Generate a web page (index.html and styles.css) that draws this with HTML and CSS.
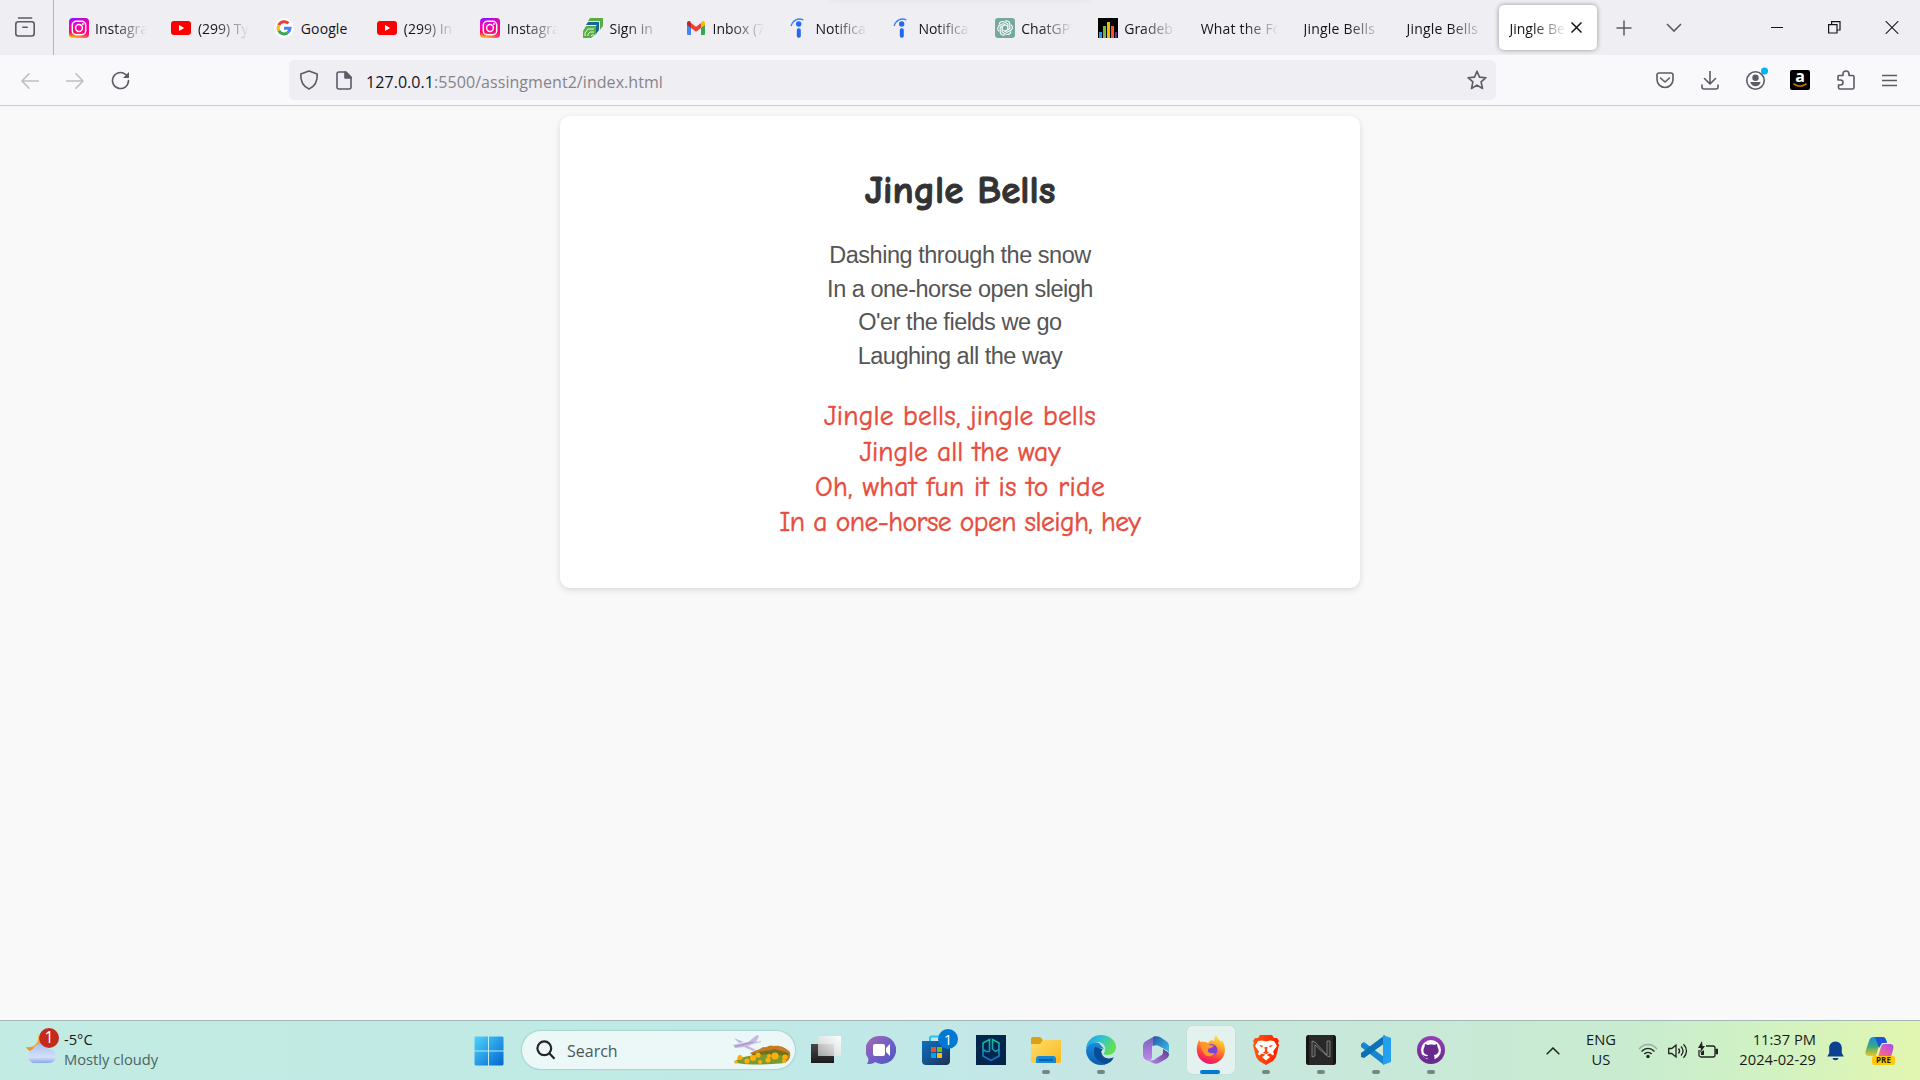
FILE: index.html
```
<!DOCTYPE html>
<html lang="en">
<head>
<meta charset="utf-8">
<title>Jingle Bells</title>
<link rel="stylesheet" href="styles.css">
</head>
<body>
<svg width="0" height="0" class="defs">
  <defs>
    <linearGradient id="insta" x1="0" y1="0" x2="0" y2="1"><stop offset="0" stop-color="#8a13ff"/><stop offset=".35" stop-color="#ff00c8"/><stop offset=".7" stop-color="#ff0069"/><stop offset="1" stop-color="#ffd000"/></linearGradient>
    <linearGradient id="instaR" x1="0" y1="0" x2="1" y2="0"><stop offset=".3" stop-color="#ff0090" stop-opacity="0"/><stop offset="1" stop-color="#ff0090"/></linearGradient>
    <linearGradient id="win" x1="0" y1="0" x2="1" y2="1"><stop offset="0" stop-color="#4fd3ff"/><stop offset="1" stop-color="#0067cf"/></linearGradient>
    <linearGradient id="cloud" x1="0" y1="0" x2="0" y2="1"><stop offset="0" stop-color="#a9c4f5"/><stop offset=".7" stop-color="#d4dff8"/><stop offset="1" stop-color="#86a8ea"/></linearGradient>
    <linearGradient id="moon" x1="0" y1="0" x2="0" y2="1"><stop offset="0" stop-color="#f8c13c"/><stop offset="1" stop-color="#ee8a1d"/></linearGradient>
    <linearGradient id="chat" x1="0" y1="0" x2="1" y2="1"><stop offset="0" stop-color="#a768b0"/><stop offset=".5" stop-color="#7460c4"/><stop offset="1" stop-color="#4c55c0"/></linearGradient>
    <linearGradient id="store" x1="0" y1="0" x2="1" y2="1"><stop offset="0" stop-color="#0a72c4"/><stop offset="1" stop-color="#203052"/></linearGradient>
    <linearGradient id="folder" x1="0" y1="0" x2="1" y2="1"><stop offset="0" stop-color="#ffdd6b"/><stop offset="1" stop-color="#fbb91c"/></linearGradient>
    <linearGradient id="edgeTop" x1="0" y1="0" x2="1" y2=".4"><stop offset="0" stop-color="#1d9be0"/><stop offset=".5" stop-color="#2fc3d8"/><stop offset="1" stop-color="#63e04f"/></linearGradient>
    <linearGradient id="edgeLow" x1="0" y1="0" x2="0" y2="1"><stop offset="0" stop-color="#1690dc"/><stop offset="1" stop-color="#0c5cb0"/></linearGradient>
    <linearGradient id="foxBody" x1=".8" y1="0" x2=".4" y2="1"><stop offset="0" stop-color="#fff04a"/><stop offset=".4" stop-color="#ff9a25"/><stop offset=".75" stop-color="#ff3d3f"/><stop offset="1" stop-color="#e9127b"/></linearGradient>
    <linearGradient id="brave" x1="0" y1="0" x2="1" y2="0"><stop offset="0" stop-color="#ff5a14"/><stop offset="1" stop-color="#ff1f00"/></linearGradient>
    <linearGradient id="gg" x1="0" y1="0" x2="0" y2="1"><stop offset="0" stop-color="#12c39d"/><stop offset="1" stop-color="#1569ce"/></linearGradient>
    <linearGradient id="git" x1="0" y1="0" x2="0" y2="1"><stop offset="0" stop-color="#983db4"/><stop offset="1" stop-color="#65298c"/></linearGradient>
    <linearGradient id="m1" x1="0" y1="0" x2="0" y2="1"><stop offset="0" stop-color="#7560bd"/><stop offset="1" stop-color="#c487ed"/></linearGradient>
    <linearGradient id="m2" x1="0" y1="0" x2="1" y2="1"><stop offset="0" stop-color="#205ba8"/><stop offset="1" stop-color="#42c8f0"/></linearGradient>
    <linearGradient id="m3" x1="0" y1="1" x2="1" y2="0"><stop offset="0" stop-color="#bf83e8"/><stop offset="1" stop-color="#543a92"/></linearGradient>
    <linearGradient id="cop1" x1="0" y1="0" x2="0" y2="1"><stop offset="0" stop-color="#158ae8"/><stop offset=".5" stop-color="#3da97c"/><stop offset="1" stop-color="#f2c61f"/></linearGradient>
    <linearGradient id="cop2" x1="0" y1="1" x2="1" y2="0"><stop offset="0" stop-color="#f7786b"/><stop offset=".5" stop-color="#e05bb5"/><stop offset="1" stop-color="#9a50ee"/></linearGradient>
    <linearGradient id="dark" x1="0" y1="0" x2="0" y2="1"><stop offset="0" stop-color="#4a4a4a"/><stop offset="1" stop-color="#1b1b1b"/></linearGradient>
    <linearGradient id="glass" x1="1" y1="0" x2="0" y2="1"><stop offset="0" stop-color="#ffffff"/><stop offset="1" stop-color="#cfcfcf" stop-opacity=".75"/></linearGradient>
    <symbol id="i-insta" viewBox="0 0 20 20"><rect width="20" height="20" rx="4" fill="url(#insta)"/><rect width="20" height="20" rx="4" fill="url(#instaR)" opacity=".7"/><rect x="3.3" y="3.3" width="13.4" height="13.4" rx="4" fill="none" stroke="#fff" stroke-width="1.5"/><circle cx="10" cy="10" r="3.4" fill="none" stroke="#fff" stroke-width="1.5"/><circle cx="13.9" cy="6.1" r="1" fill="#fff"/></symbol>
    <symbol id="i-yt" viewBox="0 0 20 20"><rect y="3" width="20" height="14" rx="3" fill="#f00"/><path d="M8 7l5.2 3L8 13z" fill="#fff"/></symbol>
    <symbol id="i-google" viewBox="0 0 20 20"><circle cx="10" cy="10" r="10" fill="#fff"/><g fill="none" stroke-width="3"><path d="M14.4 5.4A6 6 0 0 0 4.8 7.2" stroke="#ea4335"/><path d="M4.8 7.2a6 6 0 0 0 0 5.6" stroke="#fbbc05"/><path d="M4.8 12.8a6 6 0 0 0 9 1.8" stroke="#34a853"/><path d="M13.8 14.6A6 6 0 0 0 16 10.3H10" stroke="#4285f4"/></g></symbol>
    <symbol id="i-sign" viewBox="0 0 20 20"><path d="M7 0h13v8l-3 4V3H5z" fill="#59ad45"/><path d="M5 4h11v8l-3 4V7H3z" fill="#16669c"/><path d="M4.500 3.500h12M2.500 7.500h11" stroke="#efeef3" stroke-width=".8"/><path d="M3 8h10v8l-5 4H0v-7z" fill="#59ad45"/><path d="M2 18v-3l3-4h6M5 18v-2l2-2h4M8 18l1-1h2" fill="none" stroke="#e5f3df" stroke-width="1"/></symbol>
    <symbol id="i-gmail" viewBox="0 0 20 20"><path d="M1 6v10a1 1 0 0 0 1 1h3V9z" fill="#4285f4"/><path d="M15 9v8h3a1 1 0 0 0 1-1V6z" fill="#34a853"/><path d="M15 5v5l4-3V5c0-2-2-2.6-3.3-1.600z" fill="#fbbc04"/><path d="M5 5v5l5 3.800L15 10V5l-5 3.800z" fill="#ea4335"/><path d="M1 5v2l4 3V5l-.7-1.600C3 2.400 1 3 1 5z" fill="#c5221f"/></symbol>
    <symbol id="i-indeed" viewBox="0 0 20 20"><path d="M2 8C4 2 9-.5 14.500 2" fill="none" stroke="#3c80f5" stroke-width="1.300"/><circle cx="9.700" cy="6" r="2.700" fill="#2268f2"/><rect x="7.800" y="10.200" width="4" height="9.500" rx="1.800" fill="#2268f2"/></symbol>
    <symbol id="i-gpt" viewBox="0 0 20 20"><rect width="20" height="20" rx="3" fill="#75a99b"/><g fill="none" stroke="#fff" stroke-width="1.100"><g id="petal"><path d="M10 3.200a3.400 3.400 0 0 1 4.800 2.400v5L10 13.200"/></g><use href="#petal" transform="rotate(60 10 10)"/><use href="#petal" transform="rotate(120 10 10)"/><use href="#petal" transform="rotate(180 10 10)"/><use href="#petal" transform="rotate(240 10 10)"/><use href="#petal" transform="rotate(300 10 10)"/></g></symbol>
    <symbol id="i-grade" viewBox="0 0 20 20"><path d="M0 0h20v20H0z"/><path d="M1 14h3v6H1z" fill="#1e9cf0"/><path d="M5 8h3v12H5z" fill="#6fbd3c"/><path d="M9 4h3v16H9z" fill="#f7b500"/><path d="M13 8h3v12h-3z" fill="#f4591f"/><path d="M17 14h2v6h-2z" fill="#6a2793"/></symbol>
  </defs>
</svg>

<header class="tabstrip">
  <div class="strip-shadow"></div>
  <div class="view-btn"><svg width="20" height="20" viewBox="0 0 20 20" fill="none" stroke="#5b5b66" stroke-width="1.600" stroke-linecap="round"><rect x=".8" y="4.800" width="18.400" height="14.200" rx="2.500"/><path d="M3.500 1h13M7.800 10.200h4.400"/></svg></div>
  <nav class="tabs">
    <div class="tab"><svg><use href="#i-insta"/></svg><span>Instagra</span></div>
    <div class="tab"><svg><use href="#i-yt"/></svg><span>(299) Ty</span></div>
    <div class="tab"><svg><use href="#i-google"/></svg><span class="whole">Google</span></div>
    <div class="tab"><svg><use href="#i-yt"/></svg><span>(299) In</span></div>
    <div class="tab"><svg><use href="#i-insta"/></svg><span>Instagra</span></div>
    <div class="tab"><svg><use href="#i-sign"/></svg><span>Sign in</span></div>
    <div class="tab"><svg><use href="#i-gmail"/></svg><span>Inbox (7</span></div>
    <div class="tab"><svg><use href="#i-indeed"/></svg><span>Notifica</span></div>
    <div class="tab"><svg><use href="#i-indeed"/></svg><span>Notifica</span></div>
    <div class="tab"><svg><use href="#i-gpt"/></svg><span>ChatGPT</span></div>
    <div class="tab"><svg><use href="#i-grade"/></svg><span>Gradeb</span></div>
    <div class="tab title-only"><span>What the Fo</span></div>
    <div class="tab title-only"><span>Jingle Bells</span></div>
    <div class="tab title-only"><span>Jingle Bells</span></div>
    <div class="tab active"><span>Jingle Be</span><svg class="close" viewBox="0 0 11 11" stroke="#15141a" stroke-width="1.500"><path d="M.5.5l10 10M10.500.5l-10 10"/></svg></div>
  </nav>
  <div class="strip-tools">
    <svg width="16" height="16" viewBox="0 0 16 16" stroke="#5b5b66" stroke-width="1.500"><path d="M8 .5v15M.5 8h15"/></svg>
    <svg width="16" height="10" viewBox="0 0 16 10" fill="none" stroke="#5b5b66" stroke-width="1.600"><path d="M1 1l7 7 7-7"/></svg>
  </div>
  <div class="win-tools">
    <svg width="12" height="13" viewBox="0 0 12 13" stroke="#15141a"><path d="M0 6.500h12"/></svg>
    <svg width="13" height="13" viewBox="0 0 13 13" fill="none" stroke="#15141a" stroke-width="1.200"><path d="M.6 3.600h8.400v8.400H.6zM3.600 3.600V.6h8.400V9H9"/></svg>
    <svg width="14" height="13" viewBox="0 0 14 13" stroke="#15141a" stroke-width="1.100"><path d="M.7.2l12.600 12.600M13.300.2L.7 12.800"/></svg>
  </div>
</header>

<section class="toolbar">
  <div class="history">
    <svg width="18" height="16" viewBox="0 0 18 16" class="off"><path d="M17.500 8H1M8 .800L1 8l7 7.200"/></svg>
    <svg width="18" height="16" viewBox="0 0 18 16" class="off"><path d="M.5 8H17M10 .800L17 8l-7 7.200"/></svg>
    <svg width="19" height="19" viewBox="0 0 19 19"><path d="M17.500 9.500a8 8 0 1 1-3-6.200l1.500 1.500"/><path d="M18 1v6h-6z" fill="#5b5b66" stroke="none"/></svg>
  </div>
  <div class="url">
    <svg width="20" height="20" viewBox="0 0 20 20"><path d="M10 1l8.200 3c.4 7-2 12.200-8.200 15C3.800 16.200 1.400 11 1.800 4z"/></svg>
    <svg width="16" height="19" viewBox="0 0 16 19" class="page-icon"><path d="M3 1h7l5 5v10a2 2 0 0 1-2 2H3a2 2 0 0 1-2-2V3a2 2 0 0 1 2-2z"/><path d="M9 1v6h6z" fill="#5b5b66"/></svg>
    <p class="address"><b>127.0.0.1</b>:5500/assingment2/index.html</p>
    <svg width="20" height="20" viewBox="0 0 20 20"><path d="M10 1.200l2.500 5.900 6.400.6-4.800 4.200 1.400 6.600-5.500-3.400-5.500 3.400 1.400-6.600L1.100 7.700l6.400-.6z"/></svg>
  </div>
  <div class="actions">
    <svg width="18" height="17" viewBox="0 0 18 17"><path d="M3 1h12a2 2 0 0 1 2 2v4.500a8 8 0 0 1-16 0V3a2 2 0 0 1 2-2zM4.500 6L9 10l4.500-4"/></svg>
    <svg width="18" height="19" viewBox="0 0 18 19"><path d="M9 0v12.500M3.500 7.500L9 13l5.500-5.500M1 14v2a2 2 0 0 0 2 2h12a2 2 0 0 0 2-2v-2"/></svg>
    <svg width="22" height="23" viewBox="0 0 22 23" class="account"><circle cx="9.500" cy="13.500" r="8.700"/><g fill="#5b5b66" stroke="none"><circle cx="9.500" cy="10.800" r="3.200"/><path d="M4.300 15h10.400c-.8 3.200-3 4.200-5.200 4.200S5.100 18.200 4.300 15z"/></g><circle cx="18.500" cy="4" r="3.500" fill="#00b3f4" stroke="none"/></svg>
    <span class="amazon"><i>a</i><svg width="14" height="5" viewBox="0 0 14 5"><path d="M1 1c4 3 8 3 12 0" class="smile"/></svg></span>
    <svg width="18" height="20" viewBox="0 0 18 20"><path d="M2 5.500h4V4a3 3 0 0 1 6 0v1.500h3.500a1.500 1.500 0 0 1 1.500 1.500v10.500a1.500 1.500 0 0 1-1.500 1.500H3a1.500 1.500 0 0 1-1.500-1.500V15h2a2.500 2.500 0 0 0 0-5H1V6.500a1 1 0 0 1 1-1z"/></svg>
    <svg width="15" height="13" viewBox="0 0 15 13"><path d="M0 1.500h15M0 6.500h15M0 11.500h15"/></svg>
  </div>
</section>

<main class="page">
  <article class="card">
    <h1>Jingle Bells</h1>
    <p class="verse">Dashing through the snow<br>In a one-horse open sleigh<br>O'er the fields we go<br>Laughing all the way</p>
    <p class="chorus"><span class="c1">Jingle bells, jingle bells</span><span class="c2">Jingle all the way</span><span class="c3">Oh, what fun it is to ride</span><span class="c4">In a one-horse open sleigh, hey</span></p>
  </article>
</main>

<footer class="taskbar">
  <div class="weather">
    <svg width="36" height="40" viewBox="0 0 36 40"><path d="M13 8c1 9-4 13-12 12 2 6 14 7 18-1 2-5-1-9-6-11z" fill="url(#moon)"/><path d="M8 36a7.500 7.500 0 0 1 0-14 9 9 0 0 1 16 0 7 7 0 0 1 0 14z" fill="url(#cloud)"/><circle cx="24" cy="11" r="10" fill="#c42b1c"/><text x="24" y="16.200" class="badge-num">1</text></svg>
    <div><p class="temp">-5°C</p><p class="sky">Mostly cloudy</p></div>
  </div>
  <div class="start"><svg width="30" height="30" viewBox="0 0 30 30"><path d="M1.500.5H14v14H.5v-13zM15 .5h13.500l1 1v13H15zM.5 15.500H14v14H1.500l-1-1zM15 15.500h14.500v13l-1 1H15z" fill="url(#win)"/></svg></div>
  <div class="search">
    <svg width="20" height="20" viewBox="0 0 20 20" fill="none" stroke="#252525" stroke-width="2.200"><circle cx="8.300" cy="8.300" r="6.900"/><path d="M13 13l5.500 5.800"/></svg>
    <span>Search</span>
    <svg width="58" height="32" viewBox="0 0 58 32"><path d="M17 19c6-3 9-3 13-6 5 1 6-3 11-1 6-1 12 2 16 6 1 6-1 8-5 11-13 1-25 0-35-10z" fill="#c97a24"/><path d="M19 20c10-4 18-3 23-5 5 2 11 2 14 5l-7 9H22z" fill="#71721c"/><path d="M1 28c8-8 35-9 53-6 3 3-1 5-4 7-16 2-35 2-46 0z" fill="#799b2d"/><g fill="#ffae10"><circle cx="7" cy="23.500" r="2.600"/><circle cx="14" cy="27" r="2.600"/><circle cx="3" cy="28" r="1.800"/><circle cx="20" cy="24" r="3"/><circle cx="25" cy="21" r="2.600"/><circle cx="27" cy="28" r="2"/><circle cx="35" cy="26" r="2.600"/><circle cx="36" cy="22" r="2"/><circle cx="42" cy="22" r="3.600"/><circle cx="52" cy="23" r="2.600"/><circle cx="51" cy="27" r="2"/></g><path d="M0 11l15-3 9-7 2 1-3 6 5-1v1l-8 2-5 2 8 4-3 1-9-4-9 1zM1 4l10 4-5 1z" fill="#c3b9de"/><path d="M2 12.500l18-4.500" stroke="#9d8fc4"/></svg>
  </div>
  <div class="apps">
    <div class="app"><svg viewBox="0 0 30 30"><path d="M0 9h23v19H0z" fill="url(#dark)"/><path d="M8 1h22v20H7V2z" fill="url(#glass)"/></svg></div>
    <div class="app"><svg viewBox="0 0 30 30"><path d="M15 1a14 14 0 1 1-6 26c-2 2-5 2-8 2 1-2 2-4 1-6A14 14 0 0 1 15 1z" fill="url(#chat)"/><rect x="7" y="9" width="12" height="12" rx="2" fill="#fff"/><path d="M20 13l4-4v12l-4-4z" fill="#fff"/></svg></div>
    <div class="app store"><svg viewBox="0 0 30 30"><path d="M9 7V3c0-1 .5-1.500 1.500-1.500h9C20.500 1.500 21 2 21 3v4" fill="none" stroke="#29c0f4" stroke-width="2"/><path d="M1 6h28v20c0 2-1 4-4 4H5c-3 0-4-2-4-4z" fill="url(#store)"/><path d="M10 12h5v5h-5z" fill="#f25022"/><path d="M16 12h5v5h-5z" fill="#7fba00"/><path d="M10 18h5v5h-5z" fill="#00a4ef"/><path d="M16 18h5v5h-5z" fill="#ffb900"/></svg><em class="count">1</em></div>
    <div class="app"><svg viewBox="0 0 30 30"><path d="M0 0h30v30H0z" fill="#03254b"/><path d="M14 16.500h-4l-3-2V8l6.500-3.500v12M7 14v7l8 4.500 8-4.500V8l-6.500-3.500v9.500l3 2.500 3.500-2" fill="none" stroke="url(#gg)" stroke-width="1.600"/></svg></div>
    <div class="app open"><svg viewBox="0 0 30 30"><path d="M0 4c0-1 .5-2 2-2h7l3 3h17c1 0 1 1 1 2v5H0z" fill="#dda015"/><path d="M0 9h9l3-4h17l1 1v20c0 1-1 2-2 2H2c-1 0-2-1-2-2z" fill="url(#folder)"/><path d="M5 28v-4a3 3 0 0 1 3-3h14a3 3 0 0 1 3 3v4z" fill="#1688d8"/><path d="M8 25h14" stroke="#0b4e8f" stroke-width="1.300"/></svg></div>
    <div class="app open"><svg viewBox="0 0 30 30"><path d="M15 30A15 15 0 0 1 0 16C1 8 8 6 13 8l6 7c-5-5-11 0-9 6 2 5 10 7 17 3-3 4-7 6-12 6z" fill="url(#edgeLow)"/><path d="M9 12c-3 6 0 14 10 17 4-1 7-3 9-7-5 3-11 1-12-3-1-2-1-3 1-5z" fill="#0a4d96"/><path d="M0 15C0 6 7 0 15 0c9 0 15 6 15 12 0 5-4 8-8 8-4 0-5-1-4-2 3-4 1-11-7-11C5 7 1 11 0 15z" fill="url(#edgeTop)"/></svg></div>
    <div class="app"><svg viewBox="0 0 30 30"><path d="M14 1L5 6c-2 1-3 3-3 5v9c0 2 1 4 3 5l3 1c2-1 3-2 3-4v-9c0-2 1-4 3-5l4-2z" fill="url(#m1)"/><path d="M12 2c2-1 5-1 7 0l6 4c2 1 3 3 3 5v9c0-3-1-4-3-5l-7-4c-2-1-4-1-6 0z" fill="url(#m2)"/><path d="M8 26l4 2c2 1 4 1 6 0l7-4c4-3 4-6 0-8l-3-2v3c0 2-1 3-3 4l-6 4z" fill="url(#m3)"/></svg></div>
    <div class="app open current"><svg viewBox="0 0 30 30"><path d="M3 5l3 4c2-2 4-2 6-1l3-3 3 1c0-3 1-5 2-6 1 3 4 5 5 7l1-2c6 9 3 23-11 24C4 29-3 18 3 5z" fill="url(#foxBody)"/><circle cx="15.500" cy="15" r="6" fill="#8241d6"/><path d="M4 7c4-1 7 0 9 3 2 0 4 0 5 1-2 2-5 2-6 3-1 4 3 5 7 4-3 5-10 4-12-1-2-4-2-7-3-10z" fill="#ff982c"/></svg></div>
    <div class="app open"><svg viewBox="0 0 30 30"><path d="M9 0h12l2 3h3l2 3-1 2 1 2-3 12-3 4-7 4-7-4-3-4L2 10l1-2-1-2 2-3h3z" fill="url(#brave)"/><path d="M7 6l4-.5 4 1 4-1 4 .5 3 5-4 5.500 1 2.500-1 1.500-3-2-4 1.500-4-1.500-3 2L7 19l1-2.500L4 11z" fill="#fff"/><path d="M11 22l4-2.500 4 2.500-4 3.500z" fill="#fff"/><path d="M8 10l4 .8-1 2zM22 10l-4 .8 1 2zM13.500 12h3l-.5 4 2 2-3 1-3-1 2-2z" fill="#ff4512"/></svg></div>
    <div class="app open"><svg viewBox="0 0 30 30"><rect width="30" height="30" rx="2.500" fill="#151515"/><rect x="3" width="24" height="30" fill="#282828"/><path d="M6 22V6l3 1 12 13V6h3v16l-3-1L9 10v11z" fill="#343434" stroke="#999" stroke-width=".7"/></svg></div>
    <div class="app open"><svg viewBox="0 0 30 30"><path d="M0 9l3-2 20 15v8L0 12z" fill="#1687cf"/><path d="M0 18v4l3 1L24 8V0z" fill="#0c70b6"/><path d="M22 0l8 3v24l-8 3z" fill="#24a0ef"/></svg></div>
    <div class="app open"><svg viewBox="0 0 30 30"><circle cx="15" cy="15" r="14" fill="url(#git)"/><circle cx="15" cy="15" r="10" fill="#fff"/><path d="M9 9l3 1c2-.6 4-.6 6 0l3-1 .5 3c3 5-.5 8-3.500 8l.5 2v4h-7v-3c-3 1-3-1-5-3 2 0 3 2 5 1l.5-1c-4 0-6-4-3.500-8z" fill="#67298d"/></svg></div>
  </div>
  <div class="tray">
    <svg width="14" height="8" viewBox="0 0 14 8" class="line chev"><path d="M.7 7.300L7 1l6.300 6.300" stroke-width="1.500"/></svg>
    <p class="lang">ENG<br>US</p>
    <svg width="20" height="16" viewBox="0 0 20 16" class="line wifi"><path d="M1 6c5-6 13-6 18 0" opacity=".3"/><path d="M3.500 8.500c4-4 9-4 13 0M6.300 11c2-2.300 5.400-2.300 7.400 0"/><circle cx="10" cy="13.500" r="1.700" fill="#222" stroke="none"/></svg>
    <svg width="20" height="16" viewBox="0 0 20 16" class="line speaker"><path d="M.7 5.500h3L8 2v12l-4.300-3.500h-3zM10.500 5.500c1.300 1.500 1.300 3.500 0 5M13 3.500c2.500 2.700 2.500 6.300 0 9M15.500 1.300c4 4 4 9.400 0 13.400"/></svg>
    <svg width="20" height="18" viewBox="0 0 20 18" class="line battery"><path d="M8 5h7a2 2 0 0 1 2 2v7a2 2 0 0 1-2 2H3a2 2 0 0 1-2-2V9"/><path d="M18 8.500h1.500v4H18z" fill="#222"/><path d="M4 0L0 7h3l-1 5 5-7H4.500zM3 11l3-2v5H3z" fill="#222" stroke="none"/></svg>
    <p class="clock">11:37 PM<br><span>2024-02-29</span></p>
    <svg width="17" height="20" viewBox="0 0 17 20" class="bell"><path d="M8.500.5c4 0 6.300 3 6.300 6.500v5l2 3.500H.2l2-3.500V7C2.200 3.500 4.500.5 8.500.5zM5.500 17h6c-.5 3-5.500 3-6 0z" fill="#0b4190"/></svg>
    <svg width="30" height="30" viewBox="0 0 30 30" class="copilot"><path d="M9 1h9c2 0 3 2 4 6h-5c-3 0-3 2-4 6l-2 7H4c-4 0-4-3-3-6L4 5c1-3 2-4 5-4z" fill="url(#cop1)"/><path d="M10 1h8c2 0 3 2 4 6h-5L14 12z" fill="#1b56d8"/><path d="M19 8h6c3 0 4 2 3 6l-2 7H13l3-10c1-2 1-3 3-3z" fill="url(#cop2)"/><rect x="7" y="20" width="23" height="9" rx="2" fill="#ffc80a"/><text x="18.500" y="27.400" class="pre">PRE</text></svg>
  </div>
</footer>
</body>
</html>
```
FILE: styles.css
```
* { box-sizing: border-box; }
body { margin: 0; width: 1920px; height: 1080px; overflow: hidden; display: flex; flex-direction: column; background: #f9f9f9; font-family: "Segoe UI", "Open Sans", "Noto Sans", sans-serif; color: #15141a; }
p, h1 { margin: 0; }
svg { display: block; flex: none; }
.defs { position: absolute; }

/* tab strip */
.tabstrip { position: relative; height: 55px; display: flex; background: #efeef3; flex: none; overflow: hidden; }
.strip-shadow { position: absolute; left: 830px; top: -11px; width: 260px; height: 10px; box-shadow: 0 0 9px rgba(0,0,0,.08); }
.view-btn { width: 54px; border-right: 1px solid #b4b4bc; padding: 17px 0 0 15px; }
.tabs { display: flex; gap: 4.930px; padding: 5px 0 0 4.500px; }
.tab { width: 98px; height: 45px; padding: 0 10px; border-radius: 5px; display: flex; align-items: center; gap: 6.500px; }
.tab svg { width: 20px; height: 20px; }
.tab span { flex: 1; min-width: 0; overflow: hidden; white-space: nowrap; font-size: 14px; line-height: 24px; padding-top: 2px; -webkit-mask-image: linear-gradient(to left, transparent, #000 34px); mask-image: linear-gradient(to left, transparent, #000 34px); }
.tab .whole { -webkit-mask-image: none; mask-image: none; letter-spacing: .1px; }
.tab.title-only span { letter-spacing: .2px; }
.tab.active { background: #fff; box-shadow: 0 0 5px rgba(0,0,0,.38); gap: 4px; }
.tab .close { width: 11px; height: 11px; margin-right: 5px; }
.strip-tools { display: flex; gap: 34px; align-items: center; margin-left: 19px; }
.win-tools { display: flex; gap: 45px; align-items: center; margin: 0 21px 0 auto; }
.win-tools svg:nth-child(2) { margin-right: -1px; }

/* navigation bar */
.toolbar { height: 51px; flex: none; display: flex; background: #f9f9fb; border-bottom: 1px solid #cccccf; padding-top: 5px; }
.toolbar svg { fill: none; stroke: #5b5b66; stroke-width: 1.600; stroke-linejoin: round; stroke-linecap: round; }
.history { width: 289px; display: flex; align-items: center; padding: 2px 0 6px 21px; gap: 27px; }
.history .off { stroke: #bdbdc3; }
.url { width: 1207px; height: 40px; background: #efeef3; border-radius: 5px; display: flex; align-items: center; padding: 0 9px 0 10px; }
.page-icon { margin: 0 14px 0 17px; }
.address { flex: 1; font-size: 16px; line-height: 24px; padding-top: 3px; color: #85848b; letter-spacing: .06px; }
.address b { font-weight: 400; color: #15141a; }
.actions { flex: 1; display: flex; align-items: center; padding: 0 23px 5px 0; justify-content: flex-end; gap: 27px; }
.account { margin: -4px -5px 0 0; }
.amazon { width: 20px; height: 20px; border-radius: 2px; background: #000; color: #fff; display: flex; flex-direction: column; align-items: center; overflow: hidden; }
.amazon i { font: bold 16px/12px "Open Sans", sans-serif; height: 13px; }
.toolbar .smile { stroke: #c57300; }

/* page */
.page { flex: 1; padding-top: 10px; background: #f9f9f9; }
.card { width: 800px; height: 472px; margin: 0 auto; background: #fff; border-radius: 10px; box-shadow: 0 2px 6px rgba(0,0,0,.13); text-align: center; padding-top: 50px; }
h1 { color: #333; font: bold 39px/50px "Comic Sans MS", "Comic Neue", "Open Sans", sans-serif; -webkit-text-stroke: 1px #333; }
.verse { margin-top: 23px; color: #555; font: 23.500px/33.600px Arial, "Liberation Sans", sans-serif; letter-spacing: -.48px; }
.chorus { margin-top: 26px; color: #e74c3c; font: 27.500px/35.200px "Comic Sans MS", "Comic Neue", "Open Sans", sans-serif; -webkit-text-stroke: .5px #e74c3c; }
.chorus span { display: block; }
.c1 { letter-spacing: .2px; }
.c3 { letter-spacing: .35px; }
.c4 { letter-spacing: -.5px; }

/* taskbar */
.taskbar { height: 60px; flex: none; display: flex; align-items: flex-start; border-top: 1px solid #a3b8b5; background: linear-gradient(90deg, #c2ebe3 0, #c0eae4 30%, #c1e8e8 48%, #c6e6e3 58%, #c8e9d8 73%, #c9ecd0 85%, #d1f2c2 92%, #e2f6b0 100%); color: #1a1a1a; }
.weather { width: 462px; display: flex; gap: 5px; padding: 0 0 0 25px; }
.weather svg { margin-top: 6px; margin-right: -2px; }
.weather p { font-size: 14.700px; line-height: 20px; }
.weather .temp { margin-top: 8px; }
.weather .sky { color: #4d6460; }
.badge-num { font: 16px "Open Sans", sans-serif; fill: #fff; text-anchor: middle; }
.start { width: 60px; padding: 15px 0 0 12px; }
.search { width: 273px; height: 38px; margin-top: 10px; border-radius: 19px; background: #ecf8f7; box-shadow: 0 0 1px 1px rgba(80,150,150,.25); display: flex; align-items: center; padding: 0 4px 0 14px; overflow: hidden; }
.search span { flex: 1; font-size: 16px; color: #4d5656; padding: 0 0 0 11px; margin-top: 2px; }
.apps { display: flex; margin-left: 3px; }
.app { position: relative; width: 55px; height: 59px; padding-top: 14px; display: flex; justify-content: center; }
.app > svg { width: 30px; height: 30px; z-index: 1; }
.app.open::after { content: ""; position: absolute; left: 24px; top: 49px; width: 8px; height: 4px; border-radius: 2px; background: #758683; }
.app.current::before { content: ""; position: absolute; inset: 5px 3.500px 6px; border-radius: 5px; background: #e3f2ef; box-shadow: 0 0 1px rgba(0,0,0,.2); }
.app.current::after { left: 17px; width: 20px; background: #0078d4; }
.count { position: absolute; left: 30px; top: 8px; z-index: 2; width: 20px; height: 20px; border-radius: 10px; background: #0078d4; color: #fff; font: 15px/20px "Open Sans", sans-serif; text-align: center; }
.tray { flex: 1; display: flex; align-items: center; height: 59px; }
.tray .line { fill: none; stroke: #222; stroke-width: 1.300; }
.chev { margin-left: 88px; }
.tray p { font-size: 14.700px; line-height: 20px; margin-top: -3px; }
.lang { width: 32px; text-align: center; margin-left: 25px; }
.wifi { margin-left: 21px; }
.speaker { margin-left: 10px; }
.battery { margin-left: 10px; margin-top: -2px; }
.clock { width: 90px; text-align: right; margin-left: 8px; }
.bell { margin-left: 11px; }
.copilot { margin-left: 21px; }
.pre { font: bold 8px "Open Sans", sans-serif; fill: #2b2100; text-anchor: middle; }
```
